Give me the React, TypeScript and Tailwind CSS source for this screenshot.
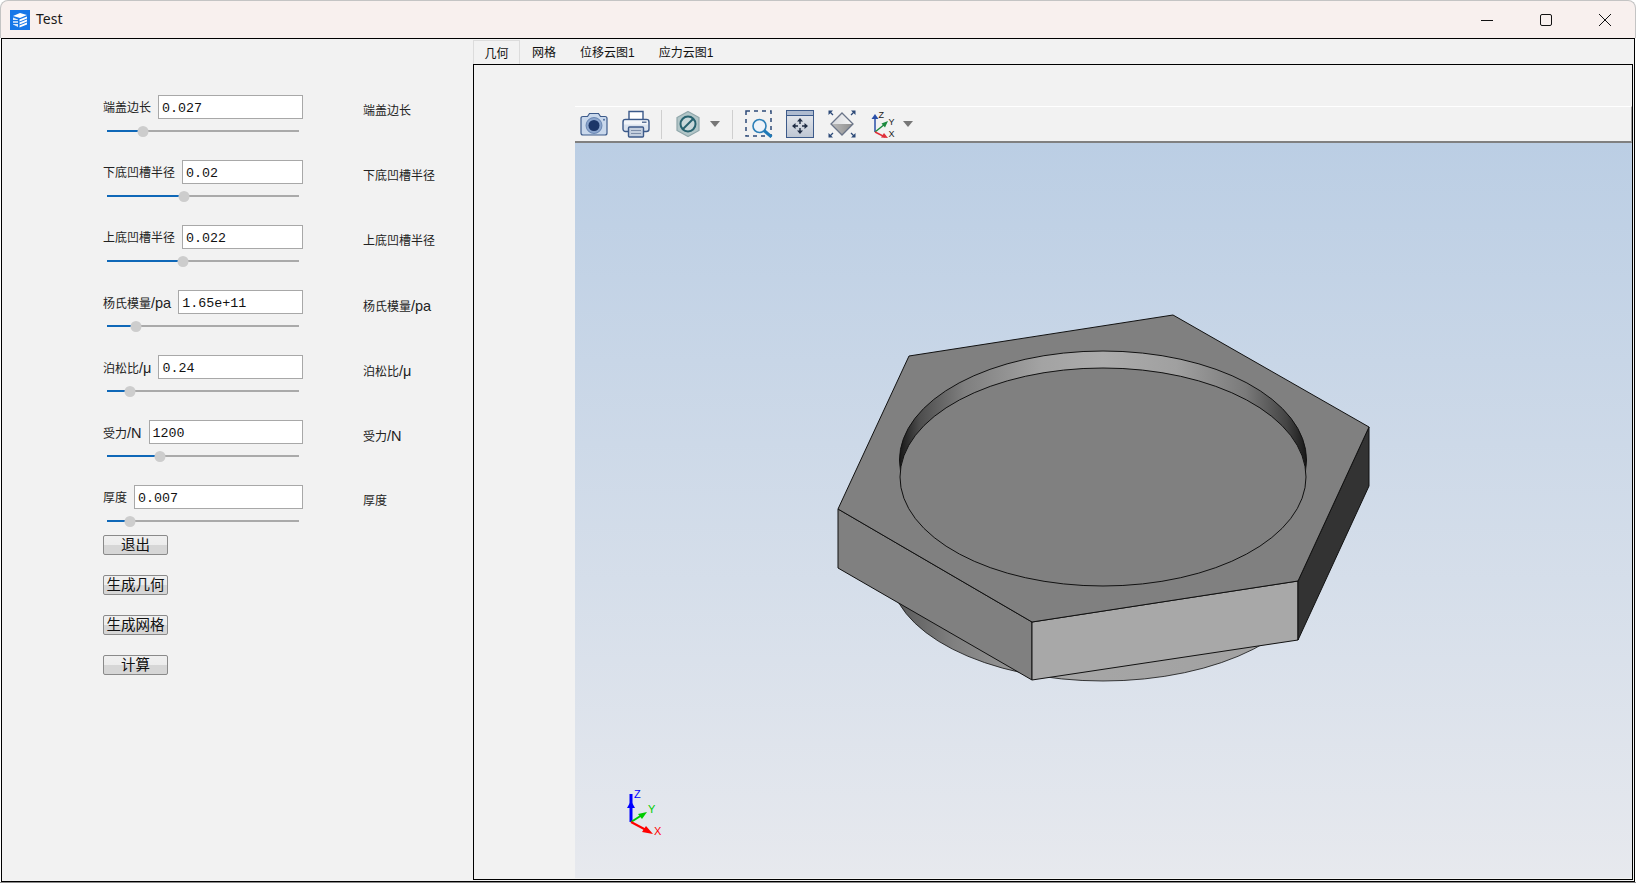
const cjk = "font-['Liberation_Sans','Noto_Sans_CJK_SC',sans-serif]";

type Field = { label: string; unit?: string; value: string; handle: number };

// handle is the centre of the knob in px from the track's left end
const FIELDS: Field[] = [
  { label: "端盖边长", value: "0.027", handle: 36 },
  { label: "下底凹槽半径", value: "0.02", handle: 77 },
  { label: "上底凹槽半径", value: "0.022", handle: 76 },
  { label: "杨氏模量", unit: "/pa", value: "1.65e+11", handle: 29 },
  { label: "泊松比", unit: "/μ", value: "0.24", handle: 23 },
  { label: "受力", unit: "/N", value: "1200", handle: 53 },
  { label: "厚度", value: "0.007", handle: 23 },
];

const ACTIONS = ["退出", "生成几何", "生成网格", "计算"];
const TABS = ["网格", "位移云图1", "应力云图1"];

const Slider = ({ handle }: { handle: number }) => (
  <div className="relative ml-1 mt-[6px] flex h-3 w-[192px] items-center">
    <div className="h-[2px] w-full bg-[#aaaaaa]" />
    <div className="absolute left-0 h-[2px] bg-[#0f68b8]" style={{ width: handle }} />
    <div
      className="absolute h-[11px] w-[11px] -translate-x-1/2 rounded-full bg-[#cdcdcd]"
      style={{ left: handle }}
    />
  </div>
);

const Label = ({ field, className }: { field: Field; className: string }) => (
  <span className={`whitespace-nowrap text-[12px] leading-4 text-[#222] ${className}`}>
    {field.label}
    {field.unit ? <span className="text-[14.5px]">{field.unit}</span> : null}
  </span>
);

const FieldRow = ({ field, last }: { field: Field; last: boolean }) => (
  <div className={`flex shrink-0 ${last ? "h-10" : "h-[65px]"}`}>
    <div className="w-[200px]">
      <div className="flex h-6 items-center gap-[7px]">
        <Label field={field} className="pt-[2px]" />
        <div className="flex h-6 min-w-0 flex-1 items-center border border-[#a8a8a8] bg-white px-[3px] pt-1 font-['Liberation_Mono',monospace] text-[13.33px] text-[#111]">
          {field.value}
        </div>
      </div>
      <Slider handle={field.handle} />
    </div>
    <Label field={field} className="ml-[60px] mt-2" />
  </div>
);

const AppIcon = () => (
  <svg width="20" height="20" viewBox="0 0 20 20" className="shrink-0">
    <rect width="20" height="20" fill="#1677e8" />
    <polygon points="3,6 10,3 17,5 10,8" fill="#fff" />
    <polygon points="3,7.5 8,9.5 8,17 3,14.5" fill="#dbe9fb" />
    <polygon points="9.5,9.5 17,6.5 17,8.5 9.5,11.5" fill="#fff" />
    <polygon points="9.5,12.5 17,9.5 17,11.5 9.5,14.5" fill="#fff" />
    <polygon points="9.5,15.5 17,12.5 17,14.5 9.5,17.5" fill="#fff" />
    <rect x="3" y="10" width="5" height="1.2" fill="#1677e8" />
    <rect x="3" y="12.8" width="5" height="1.2" fill="#1677e8" />
  </svg>
);

const TitleBar = () => (
  <div className="flex h-[38px] shrink-0 items-center rounded-t-lg border-t border-l border-r border-[#c4c4c4] bg-[#f8f0ee] pl-[9px]">
    <AppIcon />
    <span className="ml-[6px] pb-[2px] font-['Noto_Sans',sans-serif] text-[14px] text-[#1a1a1a]">Test</span>
    <div className="ml-auto flex items-center">
      <svg width="14" height="14" viewBox="0 0 14 14" className="mr-[45px]">
        <path d="M1 7.5H13" stroke="#111" strokeWidth="1" />
      </svg>
      <svg width="14" height="14" viewBox="0 0 14 14" className="mr-[45px]">
        <rect x="1.5" y="1.5" width="11" height="11" rx="1.5" fill="none" stroke="#111" strokeWidth="1" />
      </svg>
      <svg width="14" height="14" viewBox="0 0 14 14" className="mr-[23px]">
        <path d="M1 1L13 13M13 1L1 13" stroke="#111" strokeWidth="1" />
      </svg>
    </div>
  </div>
);

const CameraIcon = () => (
  <svg width="28" height="24" viewBox="0 0 28 24">
    <path d="M1 6.5Q1 4.500 3 4.500H7.500L9.500 1.500H18.500L20.500 4.500H25Q27 4.500 27 6.500V21Q27 23 25 23H3Q1 23 1 21Z" fill="#c9d8ec" stroke="#3c5a8a" strokeWidth="1.200" />
    <circle cx="14" cy="13.500" r="8" fill="#8ba5cd" stroke="#5b7aa8" strokeWidth="0.800" />
    <circle cx="14" cy="13.500" r="5.500" fill="#1c3668" />
    <circle cx="24" cy="7.800" r="1" fill="#4f6f9f" />
  </svg>
);

const PrinterIcon = () => (
  <svg width="28" height="28" viewBox="0 0 28 28">
    <path d="M7 10V1.500H21V10" fill="#fff" stroke="#3c5a8a" strokeWidth="1.400" />
    <rect x="1" y="9.500" width="26" height="12" rx="2.500" fill="#dbe3ee" stroke="#3c5a8a" strokeWidth="1.400" />
    <rect x="2" y="10.500" width="24" height="4" fill="#f2f5f9" />
    <rect x="20" y="11.500" width="4.500" height="1.500" fill="#5d7499" />
    <rect x="6.500" y="17" width="15" height="10" rx="1" fill="#c3cede" stroke="#3c5a8a" strokeWidth="1.400" />
    <path d="M9 20.500H19M9 23.500H19" stroke="#7d8eaa" strokeWidth="1.200" />
  </svg>
);

const ClipIcon = () => (
  <svg width="24" height="26" viewBox="0 0 24 26">
    <polygon points="12,0.500 23,6.500 23,19.500 12,25.500 1,19.500 1,6.500" fill="#b2c6c8" stroke="#8fa6aa" strokeWidth="1.200" />
    <circle cx="12" cy="13" r="7.500" fill="#c9d8da" stroke="#27626f" strokeWidth="2" />
    <path d="M7 18L17 8" stroke="#27626f" strokeWidth="2" />
  </svg>
);

const ZoomBoxIcon = () => (
  <svg width="28" height="28" viewBox="0 0 28 28">
    <rect x="1" y="1" width="25" height="25" fill="none" stroke="#2d4a78" strokeWidth="1.500" strokeDasharray="4 4" />
    <circle cx="14.500" cy="16" r="6.500" fill="#eef3f9" stroke="#2c7fb8" strokeWidth="1.600" />
    <path d="M19 20.500L26.500 27" stroke="#1f7ab8" strokeWidth="3" />
  </svg>
);

const PanIcon = () => (
  <svg width="28" height="28" viewBox="0 0 28 28">
    <defs>
      <linearGradient id="panBody" x1="0" y1="0" x2="0" y2="1">
        <stop offset="0" stopColor="#e8ebf0" />
        <stop offset="1" stopColor="#bec6d3" />
      </linearGradient>
    </defs>
    <rect x="0.500" y="0.500" width="27" height="27" fill="url(#panBody)" stroke="#3c5a8a" />
    <rect x="1" y="1" width="26" height="4" fill="#aebbd0" />
    <path d="M1 5.500H27" stroke="#3c5a8a" />
    <path d="M14 10V14M14 18V22M8 16H12M16 16H20" stroke="#1f2c44" strokeWidth="1.400" />
    <path d="M14 8L11 11.500H17ZM14 24L11 20.500H17ZM6 16L9.500 13V19ZM22 16L18.500 13V19Z" fill="#1f2c44" />
  </svg>
);

const FitIcon = () => (
  <svg width="28" height="28" viewBox="0 0 28 28">
    <defs>
      <linearGradient id="fitUp" x1="0" y1="0" x2="1" y2="0">
        <stop offset="0" stopColor="#d8dade" />
        <stop offset="1" stopColor="#f6f6f6" />
      </linearGradient>
      <linearGradient id="fitDown" x1="0" y1="0" x2="1" y2="0">
        <stop offset="0" stopColor="#bcbcbc" />
        <stop offset="1" stopColor="#8e8e8e" />
      </linearGradient>
    </defs>
    <polygon points="14,3 25,14 3,14" fill="url(#fitUp)" />
    <polygon points="25,14 14,25 3,14" fill="url(#fitDown)" />
    <polygon points="14,3 25,14 14,25 3,14" fill="none" stroke="#6a7488" strokeWidth="1.300" />
    <path d="M1.500 1.500L5 5M26.500 1.500L23 5M1.500 26.500L5 23M26.500 26.500L23 23" stroke="#2d4a78" strokeWidth="1.300" />
    <path d="M0.500 0.500H5L0.500 5ZM27.500 0.500H23L27.500 5ZM0.500 27.500H5L0.500 23ZM27.500 27.500H23L27.500 23Z" fill="#2d4a78" />
  </svg>
);

const AxisIcon = () => (
  <svg width="30" height="28" viewBox="0 0 30 28" className={cjk}>
    <path d="M5 22V7" stroke="#2a4fa8" strokeWidth="1.500" />
    <polygon points="5,4 1.500,9 8.500,9" fill="#2a4fa8" />
    <path d="M5 22L15 14" stroke="#1c8a3e" strokeWidth="1.500" />
    <polygon points="18,11 11.500,13.500 15,17.500" fill="#1c8a3e" />
    <path d="M5 22L15 27" stroke="#e0303a" strokeWidth="1.500" />
    <polygon points="18,28 11,27.500 14,23" fill="#e0303a" />
    <text x="8.500" y="7.500" fontSize="9" fill="#222">Z</text>
    <text x="18.500" y="15" fontSize="9" fill="#222">Y</text>
    <text x="18.500" y="27" fontSize="9" fill="#222">X</text>
  </svg>
);

const Caret = ({ className }: { className: string }) => (
  <svg width="10" height="6" viewBox="0 0 10 6" className={className}>
    <polygon points="0,0 10,0 5,6" fill="#777" />
  </svg>
);

const Toolbar = () => (
  <div className="flex h-[37px] shrink-0 items-center border-t border-r border-b-2 border-t-white border-r-[#a0a0a0] border-b-[#808080] bg-[#f2f2f2] pl-[5px]">
    <CameraIcon />
    <div className="ml-[14px]"><PrinterIcon /></div>
    <div className="ml-[11px] h-[29px] w-px bg-[#cfcfcf]" />
    <div className="ml-[14px]"><ClipIcon /></div>
    <Caret className="ml-[10px]" />
    <div className="ml-[12px] h-[29px] w-px bg-[#cfcfcf]" />
    <div className="ml-[12px]"><ZoomBoxIcon /></div>
    <div className="ml-[13px]"><PanIcon /></div>
    <div className="ml-[14px]"><FitIcon /></div>
    <div className="ml-[14px]"><AxisIcon /></div>
    <Caret className="ml-[3px]" />
  </div>
);

// the model is drawn in the page's own coordinates, offset by the view's corner
const Model = () => (
  <svg
    className="absolute left-0 top-0"
    width="1056"
    height="734"
    viewBox="575 143 1056 734"
  >
    <defs>
      <linearGradient id="wall" gradientUnits="userSpaceOnUse" x1="899" y1="0" x2="1307" y2="0">
        <stop offset="0" stopColor="#161616" />
        <stop offset="0.05" stopColor="#4d4d4d" />
        <stop offset="0.16" stopColor="#7f7f7f" />
        <stop offset="0.35" stopColor="#a3a3a3" />
        <stop offset="0.5" stopColor="#ababab" />
        <stop offset="0.68" stopColor="#a0a0a0" />
        <stop offset="0.85" stopColor="#7a7a7a" />
        <stop offset="0.95" stopColor="#444444" />
        <stop offset="1" stopColor="#161616" />
      </linearGradient>
      <linearGradient id="boss" gradientUnits="userSpaceOnUse" x1="890" y1="0" x2="1316" y2="0">
        <stop offset="0" stopColor="#555555" />
        <stop offset="0.15" stopColor="#808080" />
        <stop offset="0.4" stopColor="#a6a6a6" />
        <stop offset="1" stopColor="#a0a0a0" />
      </linearGradient>
    </defs>
    <ellipse cx="1103" cy="572" rx="213" ry="109" fill="url(#boss)" stroke="#111" strokeWidth="0.800" />
    <polygon points="838,509 1032,622 1032,680 838,568" fill="#808080" stroke="#111" strokeWidth="1" />
    <polygon points="1032,622 1298,581 1298,640 1032,680" fill="#a8a8a8" stroke="#111" strokeWidth="1" />
    <polygon points="1298,581 1369,427 1369,486 1298,640" fill="#333333" stroke="#111" strokeWidth="1" />
    <polygon points="1173,315 909,356 838,509 1032,622 1298,581 1369,427" fill="#808080" stroke="#111" strokeWidth="1" />
    <ellipse cx="1103" cy="460" rx="203.500" ry="109" fill="url(#wall)" stroke="#111" strokeWidth="1" />
    <ellipse cx="1103" cy="477" rx="203" ry="109" fill="#808080" stroke="#111" strokeWidth="1" />
    {/* small orientation triad */}
    <path d="M631 822V794" stroke="#0000ff" strokeWidth="3" />
    <polygon points="631,801 627,808 635,808" fill="#0000ff" />
    <path d="M631 822L642 815" stroke="#00cc00" strokeWidth="2" />
    <polygon points="647,812 638,814 642,819" fill="#00cc00" />
    <path d="M631 822L648 831" stroke="#ff0000" strokeWidth="2" />
    <polygon points="653,834 642,832 646,826" fill="#ff0000" />
    <g className={cjk} fontSize="11">
      <text x="634" y="798" fill="#0000ff">Z</text>
      <text x="648" y="813" fill="#00cc00">Y</text>
      <text x="654" y="835" fill="#ff0000">X</text>
    </g>
  </svg>
);

export default function App() {
  return (
    <div className={`flex h-[883px] w-[1636px] flex-col overflow-hidden bg-white ${cjk}`}>
      <TitleBar />
      <div className="mx-px flex min-h-0 flex-1 border border-black bg-[#f2f2f2]">
        <aside className="flex w-[471px] shrink-0 flex-col pl-[101px] pt-[56px]">
          {FIELDS.map((field, i) => (
            <FieldRow key={field.label} field={field} last={i === FIELDS.length - 1} />
          ))}
          <div className="mt-[10px] flex flex-col gap-5">
            {ACTIONS.map((name) => (
              <button
                key={name}
                className="flex h-5 w-[65px] items-center justify-center rounded-[2px] border border-[#8a8a8a] bg-[linear-gradient(#f0f0f0_0%,#ececec_50%,#d6d6d6_50%,#d6d6d6_100%)] text-[14.5px] leading-none text-[#111]"
              >
                {name}
              </button>
            ))}
          </div>
        </aside>
        <main className="mb-px mr-px flex min-w-0 flex-1 flex-col pt-px">
          <div className="flex h-[25px] shrink-0 items-stretch border-b border-black text-[12px] text-[#111]">
            <div className="flex w-[47px] items-center justify-center border border-b-0 border-[#dcdcdc] pt-[2px]">几何</div>
            {TABS.map((tab) => (
              <div key={tab} className="flex items-center px-3 pt-[2px]">{tab}</div>
            ))}
          </div>
          <div className="flex min-h-0 flex-1 flex-col border-x border-b border-black pb-px pl-[101px] pt-[41px]">
            <Toolbar />
            <div className="relative min-h-0 flex-1 bg-[linear-gradient(#bbcee4,#e7e9ee)]">
              <Model />
            </div>
          </div>
        </main>
      </div>
      <div className="h-px shrink-0 bg-[#8a8a8a]" />
    </div>
  );
}
